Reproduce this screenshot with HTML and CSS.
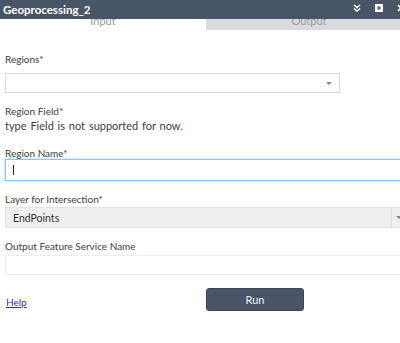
FILE: index.html
```html
<!DOCTYPE html>
<html>
<head>
<meta charset="utf-8">
<link rel="stylesheet" href="styles.css">
</head>
<body>
<div class="panel">
  <div class="header">
    <div class="title">Geoprocessing_2</div>
    <div class="icons">
      <svg class="ico" width="8" height="8" viewBox="0 0 8 8"><path d="M1 1 L4 3.5 L7 1 M1 4.5 L4 7 L7 4.5" fill="none" stroke="#fff" stroke-width="1.6"/></svg>
      <svg class="ico sq" width="8" height="8" viewBox="0 0 8 8"><rect x="0" y="0" width="8" height="8" fill="#fff"/><rect x="2.5" y="2.5" width="3" height="3" fill="#485566"/></svg>
      <svg class="ico cl" width="8" height="8" viewBox="0 0 8 8"><path d="M1 1 L7 7 M7 1 L1 7" stroke="#fff" stroke-width="1.6"/></svg>
    </div>
  </div>
  <div class="tabs">
    <div class="tab active"><span>Input</span></div>
    <div class="tab"><span>Output</span></div>
  </div>
  <div class="content">
    <div class="label first">Regions*</div>
    <div class="select regions"><span class="arrow"></span></div>

    <div class="label">Region Field*</div>
    <div class="note">type Field is not supported for now.</div>

    <div class="label tight">Region Name*</div>
    <div class="input focus"><span class="caret"></span></div>

    <div class="label">Layer for Intersection*</div>
    <div class="select layer"><span class="value">EndPoints</span><span class="btn"><span class="arrow"></span></span></div>

    <div class="label wide">Output Feature Service Name</div>
    <div class="input plain"></div>

    <div class="actions">
      <a class="help" href="#">Help</a>
      <div class="run">Run</div>
    </div>
  </div>
</div>
</body>
</html>
```
FILE: styles.css
```css
html, body {
  margin: 0;
  padding: 0;
  background: #fff;
  overflow: hidden;
}
body {
  width: 400px;
  height: 343px;
  font-family: "Lato", "Open Sans", sans-serif;
  font-size: 10px;
  color: #3d3d3d;
}
.panel {
  width: 412px;
}
.header {
  position: relative;
  z-index: 1;
  height: 19px;
  background: #485566;
  display: flex;
  align-items: center;
  justify-content: space-between;
}
.title {
  color: #fff;
  font-size: 11.5px;
  font-weight: bold;
  padding-left: 3px;
  margin-top: -1px;
}
.icons {
  display: flex;
  align-items: center;
  gap: 14px;
  margin-right: 7px;
  margin-top: -4px;
}
.tabs {
  display: flex;
  height: 11px;
}
.tab {
  flex: 1;
  text-align: center;
  color: #9a9a9a;
  line-height: 11px;
  font-size: 11px;
}
.tab span {
  display: block;
  margin-top: -4px;
}
.tab.active {
  background: #fff;
}
.tab:not(.active) {
  background: #d9dcdf;
}
.content {
  padding: 0 5px;
}
.label {
  line-height: 12px;
  margin: 12px 0 2px;
}
.label.first {
  margin-top: 23px;
  margin-bottom: 8px;
}
.label.tight {
  margin-top: 15px;
  margin-bottom: 0;
}
.label.wide {
  margin-bottom: 3px;
}
.note {
  font-size: 11px;
  word-spacing: 1px;
  line-height: 13px;
}
.select, .input {
  box-sizing: border-box;
  display: flex;
  align-items: center;
}
.select.regions {
  width: 335px;
  height: 20px;
  border: 1px solid #d9d9d9;
  justify-content: flex-end;
  padding-right: 7px;
  margin-bottom: 2px;
}
.arrow {
  width: 0;
  height: 0;
  border-left: 3px solid transparent;
  border-right: 3px solid transparent;
  border-top: 3px solid #8a8a8a;
}
.input.focus {
  height: 22px;
  border: 1px solid #89c3f7;
  box-shadow: 0 0 2px 1px #cfe6fb;
  padding-left: 7px;
}
.caret {
  width: 1px;
  height: 10px;
  background: #222;
}
.select.layer {
  height: 21px;
  background: #efefef;
  border: 1px solid #e3e3e3;
  padding-left: 7px;
  justify-content: space-between;
  font-size: 10.5px;
}
.select.layer .value {
  color: #333;
}
.btn {
  align-self: stretch;
  width: 14px;
  border-left: 1px solid #dcdcdc;
  display: flex;
  align-items: center;
  justify-content: center;
}
.input.plain {
  height: 20px;
  border: 1px solid #eeeeee;
}
.actions {
  display: grid;
  grid-template-columns: 201px 98px;
  align-items: end;
  margin-top: 13px;
}
.help {
  color: #2a2ae0;
  text-decoration: underline;
  line-height: 12px;
  margin-left: 1px;
  margin-bottom: 3px;
  justify-self: start;
}
.run {
  height: 23px;
  box-sizing: border-box;
  background: #4a5567;
  border: 1px solid #3c4656;
  border-radius: 3px;
  color: #f0f0f0;
  display: flex;
  align-items: center;
  justify-content: center;
  font-size: 11px;
}
```
